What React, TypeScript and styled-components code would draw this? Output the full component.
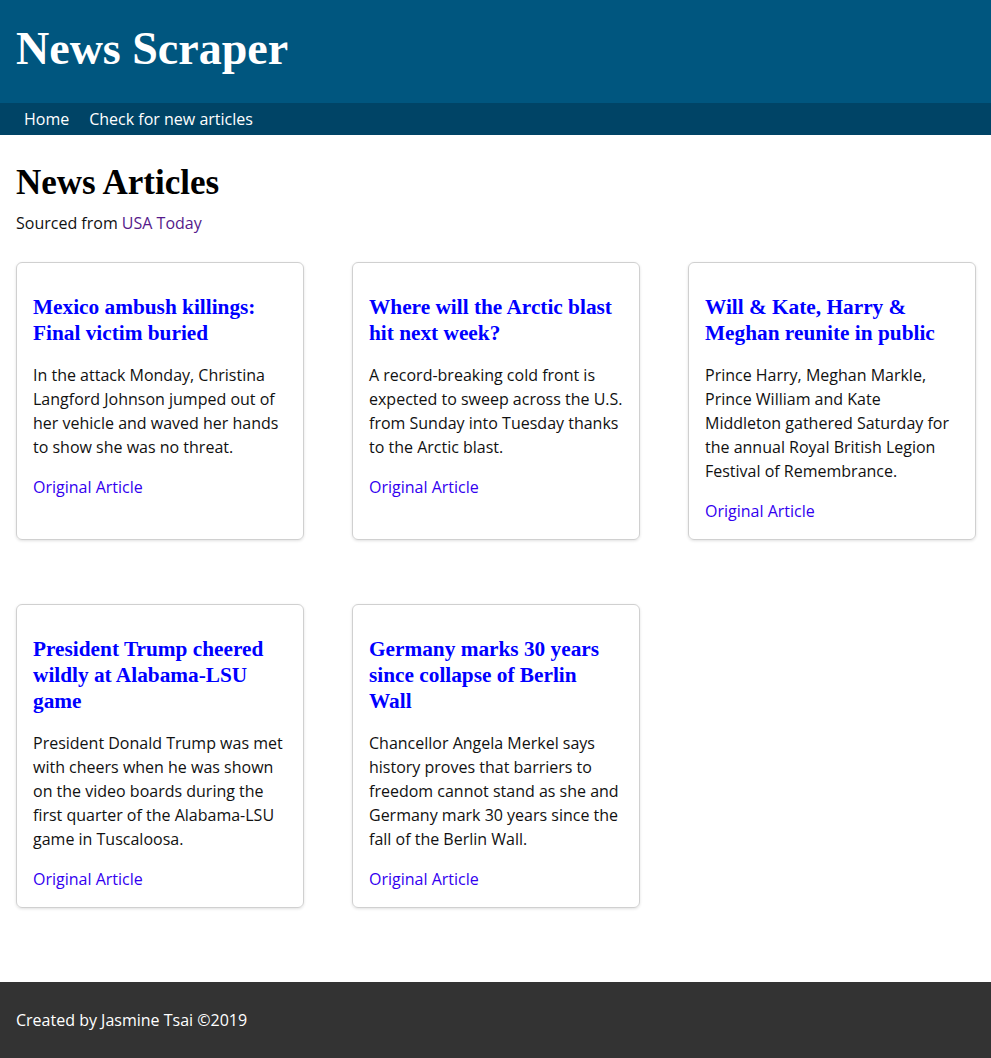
import React from 'react'
import styled, { createGlobalStyle } from 'styled-components'

//-----------------------------------------------------------------------------
// Data
//-----------------------------------------------------------------------------
const articles = [
  {
    title: 'Mexico ambush killings: Final victim buried',
    summary: 'In the attack Monday, Christina Langford Johnson jumped out of her vehicle and waved her hands to show she was no threat.'
  },
  {
    title: 'Where will the Arctic blast hit next week?',
    summary: 'A record-breaking cold front is expected to sweep across the U.S. from Sunday into Tuesday thanks to the Arctic blast.'
  },
  {
    title: 'Will & Kate, Harry & Meghan reunite in public',
    summary: 'Prince Harry, Meghan Markle, Prince William and Kate Middleton gathered Saturday for the annual Royal British Legion Festival of Remembrance.'
  },
  {
    title: 'President Trump cheered wildly at Alabama-LSU game',
    summary: 'President Donald Trump was met with cheers when he was shown on the video boards during the first quarter of the Alabama-LSU game in Tuscaloosa.'
  },
  {
    title: 'Germany marks 30 years since collapse of Berlin Wall',
    summary: 'Chancellor Angela Merkel says history proves that barriers to freedom cannot stand as she and Germany mark 30 years since the fall of the Berlin Wall.'
  }
]

//-----------------------------------------------------------------------------
// Component
//-----------------------------------------------------------------------------
const App = () => {
  return (
    <>
      <GlobalStyle />
      <Page>
        <Header>
          <Title>News Scraper</Title>
        </Header>
        <Nav>
          <NavLink href="#">Home</NavLink>
          <NavLink href="#">Check for new articles</NavLink>
        </Nav>
        <Main>
          <Heading>News Articles</Heading>
          <Source>Sourced from <SourceLink href="#">USA Today</SourceLink></Source>
          <Grid>
            {articles.map(article => (
              <Card key={article.title}>
                <CardTitle>{article.title}</CardTitle>
                <Summary>{article.summary}</Summary>
                <OriginalLink href="#">Original Article</OriginalLink>
              </Card>
            ))}
          </Grid>
        </Main>
        <Footer>Created by Jasmine Tsai ©2019</Footer>
      </Page>
    </>
  )
}

//-----------------------------------------------------------------------------
// Styled Components
//-----------------------------------------------------------------------------
const GlobalStyle = createGlobalStyle`
  * {
    box-sizing: border-box;
  }
  body {
    margin: 0;
    font-family: "Open Sans", "Liberation Sans", sans-serif;
    font-size: 16px;
    line-height: 1.5;
    color: #111;
    background: #fff;
  }
`

const Page = styled.div`
  display: flex;
  flex-direction: column;
`

const Header = styled.header`
  height: 103px;
  padding: 0 16px;
  display: flex;
  align-items: center;
  background-color: #00567f;
`

const Title = styled.h1`
  margin: 0;
  padding-bottom: 4px;
  font-family: "Liberation Serif", "Times New Roman", serif;
  font-size: 46px;
  font-weight: bold;
  line-height: 1.15;
  color: #fff;
`

const Nav = styled.nav`
  height: 32px;
  padding: 0 24px;
  display: flex;
  align-items: center;
  gap: 20px;
  background-color: #004466;
`

const NavLink = styled.a`
  color: #fff;
  text-decoration: none;
`

const Main = styled.main`
  flex: 1;
  padding: 0 16px 74px;
`

const Heading = styled.h2`
  margin: 28px 0 8px;
  font-family: "Liberation Serif", "Times New Roman", serif;
  font-size: 35px;
  font-weight: bold;
  line-height: 1.15;
  color: #000;
`

const Source = styled.p`
  margin: 0 0 27px;
`

const SourceLink = styled.a`
  color: #551a8b;
  text-decoration: none;
`

const Grid = styled.div`
  display: grid;
  grid-template-columns: repeat(3, 288px);
  column-gap: 48px;
  row-gap: 64px;
`

const Card = styled.article`
  padding: 16px;
  border: 1px solid #d0d0d0;
  border-radius: 6px;
  box-shadow: 0 1px 3px rgba(0, 0, 0, 0.12);
  display: flex;
  flex-direction: column;
`

const CardTitle = styled.h3`
  margin: 15px 0 17px;
  font-family: "Liberation Serif", "Times New Roman", serif;
  font-size: 21.3px;
  font-weight: bold;
  line-height: 26px;
  color: #0000ff;
`

const Summary = styled.p`
  margin: 0 0 16px;
`

const OriginalLink = styled.a`
  color: #3300f0;
  text-decoration: none;
`

const Footer = styled.footer`
  height: 76px;
  padding: 0 16px;
  display: flex;
  align-items: center;
  background-color: #333;
  color: #fff;
`

export default App
